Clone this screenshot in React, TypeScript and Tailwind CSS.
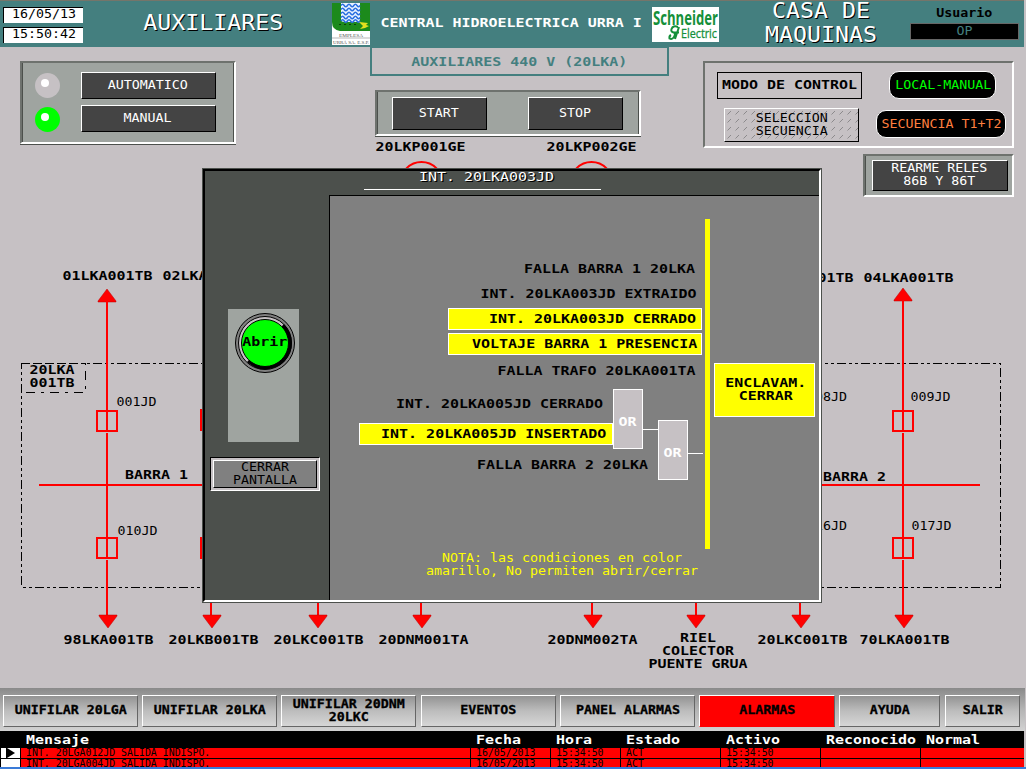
import type { ReactNode } from 'react';

const MONO = "font-['DejaVu_Sans_Mono',monospace]";

/** Regular-weight terminal text, 8px per character. */
function Thin({ children, className = '' }: { children: ReactNode; className?: string }) {
  return (
    <span className={`inline-block scale-x-[1.063] whitespace-pre text-[12.5px] leading-[13px] ${className}`}>
      {children}
    </span>
  );
}

/** Bold terminal text, 9px per character. */
function Wide({ children, className = '' }: { children: ReactNode; className?: string }) {
  return (
    <span
      className={`inline-block scale-x-[1.196] whitespace-pre text-[12.5px] leading-[13px] font-bold ${className}`}
    >
      {children}
    </span>
  );
}

function DarkButton({ children, className = '' }: { children: ReactNode; className?: string }) {
  return (
    <button
      className={`flex items-center justify-center border-t border-l border-r border-b border-t-white border-l-white border-r-black border-b-black bg-[#444444] pr-[1px] pb-[3px] text-center text-white ${className}`}
    >
      <Thin>{children}</Thin>
    </button>
  );
}

const SUNKEN =
  'border-2 border-t-[#6e726e] border-l-[#6e726e] border-r-white border-b-white';

function Led({ className }: { className: string }) {
  return (
    <div className={`h-[25px] w-[25px] rounded-full pt-[6px] pl-[6px] ${className}`}>
      <div className="h-2 w-2 rounded-full bg-white" />
    </div>
  );
}

function UrraLogo() {
  return (
    <svg width="38" height="42" viewBox="0 0 38 42" className="block">
      <rect width="38" height="42" fill="#fff" />
      <path d="M0 0H38V28H8Q0 27 0 19Z" fill="#1c8a1c" />
      <path d="M9 0H28V16Q28 19 25 19H12Q9 19 9 16Z" fill="#eaf3ff" />
      {[2.5, 6.5, 10.5, 14.5, 18].map((y) => (
        <path
          key={y}
          d={`M9 ${y}q1.6 -2.400 3.200 0t3.200 0t3.200 0t3.200 0t3.200 0t3 0`}
          fill="none"
          stroke="#2a6fe0"
          strokeWidth="1.500"
        />
      ))}
      <path d="M7 21.500H27" stroke="#0b3d0b" strokeWidth="1" strokeDasharray="2 3" />
      <path d="M27 19L36 20L34 22L37 23L33 25L28 26L31 23Z" fill="#e6e01e" />
      <text x="7" y="33.5" fontSize="5" fontFamily="Liberation Serif, serif" textLength="24" lengthAdjust="spacingAndGlyphs" fill="#555">
        EMPLESA
      </text>
      <path d="M0 35H38" stroke="#999" strokeWidth="0.7" />
      <text x="1" y="40.500" fontSize="5" fontFamily="Liberation Serif, serif" textLength="36" lengthAdjust="spacingAndGlyphs" fill="#555">
        URRÁ SA. E.S.P.
      </text>
    </svg>
  );
}

function SchneiderLogo() {
  return (
    <svg width="67" height="35" viewBox="0 0 67 35" className="block">
      <rect width="67" height="35" fill="#fff" />
      <text x="1" y="17.500" fontSize="20" fontWeight="bold" fontFamily="Open Sans, sans-serif" textLength="65" lengthAdjust="spacingAndGlyphs" fill="#15903a">
        Schneider
      </text>
      <text x="29" y="31" fontSize="13" fontFamily="Open Sans, sans-serif" textLength="36" lengthAdjust="spacingAndGlyphs" fill="#15903a" stroke="#15903a" strokeWidth="0.3">
        Electric
      </text>
      <path d="M26 20Q21 18 19.500 22Q18.500 25 22 25.500Q24 27 22 30Q20 33 17.500 31.500Q17 29 19 28M27 20L23 32M22 25.500H27" fill="none" stroke="#15903a" strokeWidth="2" />
    </svg>
  );
}

function Header() {
  return (
    <header className="flex h-[47px] w-[1024px] border-t border-[#75756a] bg-[#447f7f]">
      <div className="mt-[6px] ml-[3px] flex w-20 flex-col gap-1">
        {['16/05/13', '15:50:42'].map((t) => (
          <div key={t} className="flex h-4 items-start border-t border-l border-black bg-white pl-2">
            <Thin className="-mt-[1px] origin-left">{t}</Thin>
          </div>
        ))}
      </div>
      <div className="mt-[7px] ml-[59px] w-[142px] text-center text-white">
        <span className="inline-block scale-x-[1.057] text-[22px] leading-[30px] [text-shadow:1px_1px_0_#000]">
          AUXILIARES
        </span>
      </div>
      <div className="mt-[2px] ml-[48px]">
        <UrraLogo />
      </div>
      <div className="mt-[15px] ml-[11px] flex w-[261px] justify-center text-white">
        <Wide>CENTRAL HIDROELECTRICA URRA I</Wide>
      </div>
      <div className="mt-[6px] ml-[10px]">
        <SchneiderLogo />
      </div>
      <div className="-mt-[2px] ml-[46px] w-[112px] text-center text-white">
        <span className="inline-block scale-x-[1.057] text-[22px] leading-[24px] [text-shadow:1px_1px_0_#000]">
          CASA DE
          <br />
          MAQUINAS
        </span>
      </div>
      <div className="mt-[5px] ml-[33px] flex w-[109px] flex-col items-center">
        <Thin className="font-bold">Usuario</Thin>
        <div className="mt-1 flex h-[17px] w-full items-center justify-center border border-[#666] bg-black pb-[2px] text-[#447f7f]">
          <Thin>OP</Thin>
        </div>
      </div>
    </header>
  );
}

function Label({ x, y, children, thin = false }: { x: number; y: number; children: string; thin?: boolean }) {
  return (
    <text
      x={thin ? x : x - 0.5}
      y={y}
      fontSize="12.5"
      fontWeight={thin ? 'normal' : 'bold'}
      textLength={children.length * (thin ? 8 : 9)}
      lengthAdjust="spacingAndGlyphs"
      fill="#000"
    >
      {children}
    </text>
  );
}

function Feeder({ x, top }: { x: number; top: number }) {
  return (
    <g>
      <path d={`M${x} ${top}L${x + 9} ${top + 12}V${top + 13}H${x - 9}V${top + 12}Z`} fill="#f00" stroke="#b00" strokeWidth="0.5" />
      <path d={`M${x} ${top + 12}V432M${x} 433V559M${x} 560V616`} stroke="#f00" strokeWidth="2" />
      <rect x={x - 10} y="411" width="20" height="20" fill="none" stroke="#f00" strokeWidth="2" />
      <rect x={x - 10} y="538" width="20" height="20" fill="none" stroke="#f00" strokeWidth="2" />
    </g>
  );
}

const LABELS: [string, number, number, boolean?][] = [
  ['20LKP001GE', 376, 151],
  ['20LKP002GE', 547, 151],
  ['01LKA001TB', 63, 280],
  ['02LKA001TB', 163, 280],
  ['03LKA001TB', 764, 282],
  ['04LKA001TB', 864, 282],
  ['20LKA', 30, 374],
  ['001TB', 30, 387],
  ['001JD', 116.5, 406, true],
  ['010JD', 117.5, 535, true],
  ['008JD', 807, 401, true],
  ['009JD', 910.5, 401, true],
  ['016JD', 807, 530, true],
  ['017JD', 911.5, 530, true],
  ['BARRA 1', 125.5, 479],
  ['BARRA 2', 823.5, 481],
  ['98LKA001TB', 64, 644],
  ['20LKB001TB', 169, 644],
  ['20LKC001TB', 274, 644],
  ['20DNM001TA', 379, 644],
  ['20DNM002TA', 548, 644],
  ['RIEL', 680.5, 642],
  ['COLECTOR', 662.5, 655],
  ['PUENTE GRUA', 649, 668],
  ['20LKC001TB', 758, 644],
  ['70LKA001TB', 860, 644],
];

function Diagram() {
  return (
    <svg className="absolute top-0 left-0" width="1026" height="641" viewBox="0 47 1026 641">
      <path
        d="M21 363.500H1000.500V587H21.500V363"
        fill="none"
        stroke="#000"
        strokeDasharray="9 3 3 3 3 3"
        shapeRendering="crispEdges"
      />
      <path d="M21 363.500H85.500V392.500H21" fill="none" stroke="#000" strokeDasharray="9 6 3 6" shapeRendering="crispEdges" />
      <path d="M39 485H202M822 485H980" stroke="#f00" strokeWidth="2" />
      <Feeder x={107} top={289} />
      <Feeder x={903} top={288} />
      <path d="M201 409V431M201 537V559" stroke="#f00" strokeWidth="2" />
      {[211, 318, 421, 592, 696, 800].map((x) => (
        <path key={x} d={`M${x} 603V616`} stroke="#f00" strokeWidth="2" />
      ))}
      {[108, 212, 318, 422, 593, 696, 801, 904].map((x) => (
        <path key={x} d={`M${x - 9} 615H${x + 9}V616L${x} 628L${x - 9} 616Z`} fill="#f00" stroke="#b00" strokeWidth="0.5" />
      ))}
      <circle cx="421.500" cy="183" r="21" fill="none" stroke="#f00" strokeWidth="2" />
      <circle cx="591.500" cy="183" r="21" fill="none" stroke="#f00" strokeWidth="2" />
      {LABELS.map(([t, x, y, thin], i) => (
        <Label key={i} x={x} y={y} thin={thin}>
          {t}
        </Label>
      ))}
    </svg>
  );
}

function Hatch() {
  return (
    <svg className="absolute inset-0" width="133" height="32">
      <defs>
        <pattern id="hatch" width="8" height="8" patternUnits="userSpaceOnUse">
          <path d="M2.500 5.500L6 2" stroke="#8c8a8c" strokeWidth="1" />
        </pattern>
      </defs>
      <rect width="133" height="32" fill="url(#hatch)" />
    </svg>
  );
}

function Controls() {
  return (
    <div className="relative flex items-start">
      <section className={`mt-[14px] ml-5 flex h-[83px] w-[216px] gap-[21px] bg-[#9fa4a0] pt-[9px] pl-[13px] ${SUNKEN} shadow-[inset_1px_0_0_#4c504c,inset_-1px_0_0_#4c504c,0_1px_0_#4c504c]`}>
        <div className="flex flex-col gap-[9px] pt-[1px]">
          <Led className="bg-[#c6c1c4]" />
          <Led className="bg-[#00ff00]" />
        </div>
        <div className="flex flex-col gap-[6px]">
          <DarkButton className="h-[27px] w-[135px]">AUTOMATICO</DarkButton>
          <DarkButton className="h-[27px] w-[135px]">MANUAL</DarkButton>
        </div>
      </section>

      <div className="ml-[134px] flex w-[299px] flex-col">
        <div className="flex h-[29px] w-full items-center justify-center border-2 border-t border-[#447f7f] text-[#447f7f]">
          <Wide>AUXILIARES 440 V (20LKA)</Wide>
        </div>
        <section className={`mt-[14px] ml-[5px] flex h-[46px] w-[266px] gap-[41px] bg-[#9fa4a0] pt-[5px] pl-[15px] ${SUNKEN} shadow-[inset_1px_0_0_#4c504c,inset_-1px_0_0_#4c504c,0_1px_0_#4c504c]`}>
          <DarkButton className="h-[33px] w-[95px]">START</DarkButton>
          <DarkButton className="h-[33px] w-[95px]">STOP</DarkButton>
        </section>
      </div>

      <div className="ml-[34px] flex w-[311px] flex-col items-end pt-[14px]">
        <section className={`flex h-[87px] w-full justify-between pt-2 pr-[6px] pl-3 ${SUNKEN}`}>
          <div className="flex flex-col gap-[9px] pt-[1px]">
            <div className="flex h-[27px] w-[145px] items-center justify-center border border-black pb-[2px]">
              <Wide>MODO DE CONTROL</Wide>
            </div>
            <div className="relative ml-[7px] flex h-[34px] w-[135px] items-center justify-center border border-t-white border-l-white border-r-black border-b-black pb-[2px] text-center">
              <Hatch />
              <Thin className="relative">{'SELECCION\nSECUENCIA'}</Thin>
            </div>
          </div>
          <div className="flex flex-col items-center gap-[11px]">
            <div className="ml-[2px] flex h-[28px] w-[107px] items-center justify-center rounded-[10px] border border-white bg-black pb-[2px] pl-[3px] text-[#00ff00]">
              <Thin>LOCAL-MANUAL</Thin>
            </div>
            <div className="flex h-[28px] w-[130px] items-center justify-center rounded-[10px] border border-white bg-black pb-[2px] text-[#ff7f3f]">
              <Thin>SECUENCIA T1+T2</Thin>
            </div>
          </div>
        </section>
        <section className={`mt-[6px] flex h-[43px] w-[151px] bg-[#9fa4a0] pt-1 pl-[7px] ${SUNKEN} shadow-[inset_1px_0_0_#4c504c]`}>
          <DarkButton className="h-[31px] w-[136px]">{'REARME RELES\n86B Y 86T'}</DarkButton>
        </section>
      </div>
    </div>
  );
}

function Condition({ children, active = false, className = '' }: { children: string; active?: boolean; className?: string }) {
  return (
    <div
      className={`flex h-[22px] w-[254px] items-center justify-end border pb-[1px] ${
        active ? 'border-white bg-[#ffff00]' : 'border-transparent'
      } ${className}`}
    >
      <Wide className="origin-right">{children}</Wide>
    </div>
  );
}

function OrGate({ className }: { className: string }) {
  return (
    <div className={`absolute flex h-[60px] w-[30px] items-center justify-center border border-white bg-[#c6c1c4] pt-[4px] text-white ${className}`}>
      <Wide>OR</Wide>
    </div>
  );
}

function RoundButton() {
  return (
    <button className="relative h-[60px] w-[60px]">
      <svg width="60" height="60" viewBox="0 0 60 60" className="block">
        <circle cx="30" cy="30" r="29.500" fill="#808080" stroke="#000" />
        <circle cx="30" cy="30" r="26.500" fill="#c6c1c4" stroke="#000" />
        <path d="M49 11A26.500 26.500 0 0 1 12 49Z" fill="#000" />
        <circle cx="30" cy="30" r="23.500" fill="#00ff00" stroke="#000" />
      </svg>
      <span className="absolute inset-0 flex items-center justify-center pb-[3px]">
        <Wide>Abrir</Wide>
      </span>
    </button>
  );
}

function Dialog() {
  return (
    <div className="absolute top-[121px] left-[202px] flex h-[435px] w-[620px] flex-col border border-[#4c504c] bg-[#4c504c]">
      <div className="flex h-full flex-col border-2 border-t-black border-l-black border-r-white border-b-white">
        <div className="flex h-6 shrink-0 justify-center pr-[59px]">
          <div className="flex h-[19px] w-[237px] justify-center border-b border-white pl-[8px] text-white [text-shadow:1px_1px_0_#000]">
            <Wide className="-mt-[1px] font-normal">INT. 20LKA003JD</Wide>
          </div>
        </div>
        <div className="flex min-h-0 flex-1">
          <aside className="flex w-[124px] shrink-0 flex-col items-start">
            <div className="mt-[114px] ml-[23px] flex h-[133px] w-[71px] justify-center bg-[#9fa4a0] pt-[4px] pl-[3px]">
              <RoundButton />
            </div>
            <button className="mt-[15px] ml-[5px] h-[34px] w-[110px] border border-t-black border-l-black border-r-white border-b-white bg-[#c6c1c4] p-[2px]">
              <span className="flex h-full w-full items-center justify-center border border-t-white border-l-white border-r-black border-b-black bg-[#808080] pb-[3px] text-center">
                <Thin>{'CERRAR\nPANTALLA'}</Thin>
              </span>
            </button>
          </aside>
          <main className="relative flex-1 border-t border-l border-black bg-[#808080]">
            <div className="flex">
              <div className="flex w-[372px] flex-col items-end gap-[3px] pt-[62px]">
                <Condition className="pr-[6px]">FALLA BARRA 1 20LKA</Condition>
                <Condition className="pr-[4px]">INT. 20LKA003JD EXTRAIDO</Condition>
                <Condition active className="pr-[5px]">
                  INT. 20LKA003JD CERRADO
                </Condition>
                <Condition active className="pr-[4px]">
                  VOLTAJE BARRA 1 PRESENCIA
                </Condition>
                <Condition className="mt-[2px] pr-[5px]">FALLA TRAFO 20LKA001TA</Condition>
              </div>
              <div className="mt-[23px] ml-[3px] h-[330px] w-[5px] bg-[#ffff00]" />
              <div className="mt-[167px] ml-1 flex h-[54px] w-[101px] items-center justify-center border border-white bg-[#ffff00] pb-[3px] pl-[3px] text-center">
                <Wide>{'ENCLAVAM.\nCERRAR'}</Wide>
              </div>
            </div>
            <Condition className="absolute top-[197px] left-[26px] pr-[6px]">INT. 20LKA005JD CERRADO</Condition>
            <Condition active className="absolute top-[227px] left-[29px] pr-[6px]">
              INT. 20LKA005JD INSERTADO
            </Condition>
            <Condition className="absolute top-[258px] left-[70px] pr-[5px]">FALLA BARRA 2 20LKA</Condition>
            <OrGate className="top-[193px] left-[283px]" />
            <div className="absolute top-[233px] left-[313px] h-px w-[15px] bg-white" />
            <OrGate className="top-[224px] left-[328px]" />
            <div className="absolute top-[257px] left-[358px] h-px w-[15px] bg-white" />
            <p className="absolute top-[355px] left-[82px] w-[300px] text-center leading-[13px] text-[#ffff00]">
              <Thin>{'NOTA: las condiciones en color\namarillo, No permiten abrir/cerrar'}</Thin>
            </p>
          </main>
        </div>
      </div>
    </div>
  );
}

function NavButton({ children, className }: { children: string; className: string }) {
  return (
    <button
      className={`flex h-8 items-center justify-center border border-t-white border-l-white border-r-[#666] border-b-[#666] pb-[3px] text-center ${className}`}
    >
      <Thin className="font-bold [-webkit-text-stroke:0.3px_#000]">{children}</Thin>
    </button>
  );
}

function NavBar() {
  const metal = 'bg-linear-to-b from-[#939393] via-[#bdbdbd] to-[#d6d6d6]';
  return (
    <nav className="flex h-[43px] w-[1025px] items-start bg-linear-to-b from-[#8a8a8a] via-[#b4b4b4] to-[#d2d2d2] pt-[7px] pl-[3px]">
      <NavButton className={`w-[135px] ${metal}`}>UNIFILAR 20LGA</NavButton>
      <NavButton className={`ml-1 w-[135px] ${metal}`}>UNIFILAR 20LKA</NavButton>
      <NavButton className={`ml-1 w-[135px] ${metal}`}>{'UNIFILAR 20DNM\n20LKC'}</NavButton>
      <NavButton className={`ml-[5px] w-[135px] ${metal}`}>EVENTOS</NavButton>
      <NavButton className={`ml-1 w-[135px] ${metal}`}>PANEL ALARMAS</NavButton>
      <NavButton className="ml-1 w-[136px] border-t-[#f00] border-b-[#f00] border-l-[#f00] bg-[#f00]">ALARMAS</NavButton>
      <NavButton className={`ml-1 w-[101px] ${metal}`}>AYUDA</NavButton>
      <NavButton className={`ml-[5px] w-[75px] ${metal}`}>SALIR</NavButton>
    </nav>
  );
}

const COLS = 'grid grid-cols-[20px_450px_80px_70px_100px_100px_100px_104px]';
const HEADS = ['Mensaje', 'Fecha', 'Hora', 'Estado', 'Activo', 'Reconocido', 'Normal'];
const ALARMS = [
  ['INT. 20LGA012JD SALIDA INDISPO.', '16/05/2013', '15:34:50', 'ACT', '15:34:50', '', ''],
  ['INT. 20LGA004JD SALIDA INDISPO.', '16/05/2013', '15:34:50', 'ACT', '15:34:50', '', ''],
];

function AlarmTable() {
  return (
    <div className="h-[36px] w-[1024px] shrink-0 overflow-hidden bg-black">
      <div className={`${COLS} h-[17px] text-white`}>
        <span />
        {HEADS.map((h) => (
          <span key={h} className="pl-[6px] leading-none">
            <Wide className="origin-left leading-[15px]">{h}</Wide>
          </span>
        ))}
      </div>
      {ALARMS.map((row, r) => (
        <div key={r} className={`${COLS} mb-px h-[10px]`}>
          <span className="ml-px bg-white">
            {r === 0 && (
              <svg width="19" height="10" viewBox="0 0 19 10" className="block">
                <path d="M5.500 0V10" stroke="#000" />
                <path d="M6 0L14 5L6 10Z" fill="#000" />
              </svg>
            )}
          </span>
          {row.map((cell, c) => (
            <span
              key={c}
              className="border-l border-black bg-[#f00] pl-[5px] text-[9.9px] leading-[10px] whitespace-pre"
            >
              {cell}
            </span>
          ))}
        </div>
      ))}
    </div>
  );
}

export default function App() {
  return (
    <div className={`flex h-[769px] w-[1026px] flex-col overflow-hidden bg-[#c6c1c4] text-black ${MONO}`}>
      <Header />
      <div className="relative h-[641px] shrink-0">
        <Diagram />
        <Controls />
        <Dialog />
      </div>
      <NavBar />
      <AlarmTable />
      <div className="h-[2px] shrink-0 bg-[#3a7bd8]" />
    </div>
  );
}
